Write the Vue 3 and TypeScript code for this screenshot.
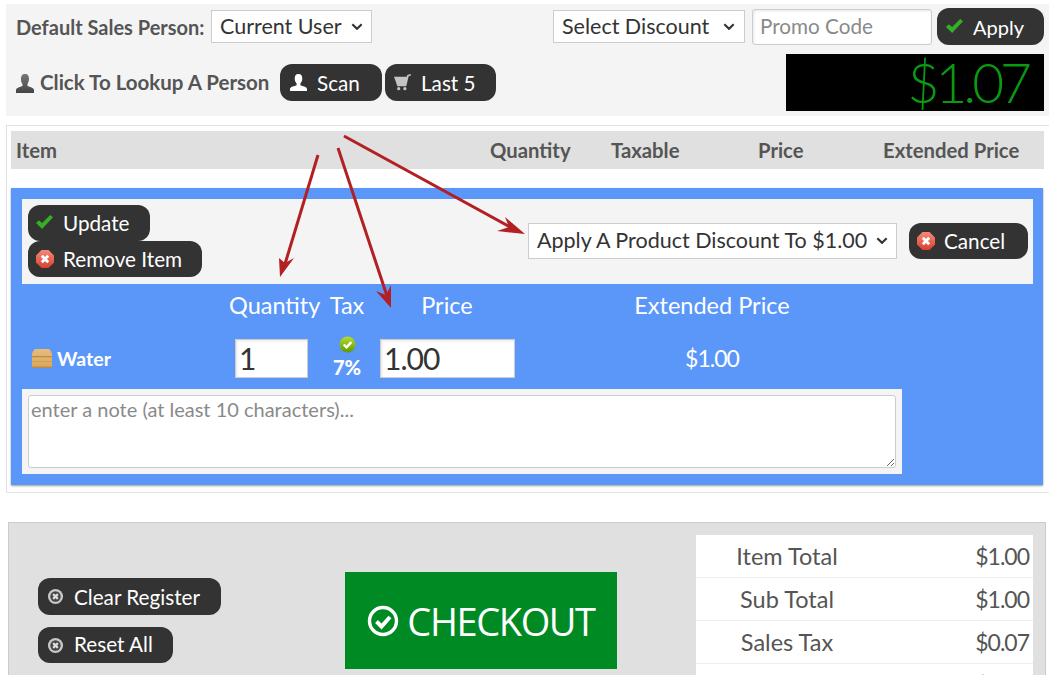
<script setup lang="ts">
const rows = [
  { label: 'Item Total', value: '$1.00' },
  { label: 'Sub Total', value: '$1.00' },
  { label: 'Sales Tax', value: '$0.07' },
  { label: 'Total', value: '$1.07' }
]
</script>

<template>
  <div class="page">
    <svg width="0" height="0" class="defs">
      <defs>
        <linearGradient id="redG" x1="0" y1="0" x2="0" y2="1"><stop offset="0" stop-color="#f58a78" /><stop offset="1" stop-color="#d8402f" /></linearGradient>
        <linearGradient id="greenG" x1="0" y1="0" x2="0" y2="1"><stop offset="0" stop-color="#b5dc2e" /><stop offset="1" stop-color="#5f9a00" /></linearGradient>
        <linearGradient id="boxG" x1="0" y1="0" x2="0" y2="1"><stop offset="0" stop-color="#e8bd78" /><stop offset="1" stop-color="#d9a65c" /></linearGradient>
        <linearGradient id="busG" x1="0" y1="0" x2="0" y2="1"><stop offset="0" stop-color="#777" /><stop offset="1" stop-color="#444" /></linearGradient>
      </defs>
    </svg>
    <section class="topbar">
      <div class="top-left">
        <div class="line first">
          <span class="lbl sales">Default Sales Person:</span>
          <span class="sel person"><span class="sel-text">Current User</span><svg class="chev" viewBox="0 0 10 6"><path d="M1 1l4 4 4-4" /></svg></span>
        </div>
        <div class="line second">
          <svg class="lookup" viewBox="0 0 18 19"><path fill="url(#busG)" d="M9 0c3 0 4 2 4 5 0 2-1 4-1.500 5v2c2 1 6.500 1.500 6.500 4v3H0v-3c0-2.500 4.500-3 6.500-4v-2C5.500 9 5 7 5 5c0-3 1-5 4-5z" /></svg>
          <span class="lbl lookup-text">Click To Lookup A Person</span>
          <button class="btn scan"><svg class="ic16" viewBox="0 0 18 18"><path fill="#fff" d="M9 0c3 0 4 2 4 5 0 2-1 4-2 5v2c2 1 7 1.500 7 4v2H0v-2c0-2.500 5-3 7-4v-2C6 9 5 7 5 5c0-3 1-5 4-5z" /></svg>Scan</button>
          <button class="btn last"><svg class="ic16" viewBox="0 0 18 18"><path fill="#c4c4c4" d="M0 3h13.500l.5-2 3.500-1 .5 1.500-2.500.8L13 13H3.500L1.500 7z" /><circle cx="5" cy="15.500" r="1.700" fill="#c4c4c4" /><circle cx="11.500" cy="15.500" r="1.700" fill="#c4c4c4" /></svg>Last 5</button>
        </div>
      </div>
      <div class="top-right">
        <div class="line promo">
          <span class="sel discount"><span class="sel-text">Select Discount</span><svg class="chev" viewBox="0 0 10 6"><path d="M1 1l4 4 4-4" /></svg></span>
          <input class="promo-input" placeholder="Promo Code" />
          <button class="btn apply"><svg class="ic16" viewBox="0 0 18 16"><path fill="#35b026" d="M0 8.500l3-3 3.500 3L15 0l3 2.500L6.500 15z" /></svg>Apply</button>
        </div>
        <div class="total">$1.07</div>
      </div>
    </section>

    <section class="register">
      <div class="thead">
        <span class="c-item">Item</span>
        <span class="c-qty">Quantity</span>
        <span class="c-tax">Taxable</span>
        <span class="c-price">Price</span>
        <span class="c-ext">Extended Price</span>
      </div>
      <div class="editor">
        <div class="actions">
          <div class="stack">
            <button class="btn update"><svg class="ic16" viewBox="0 0 18 16"><path fill="#35b026" d="M0 8.500l3-3 3.500 3L15 0l3 2.500L6.500 15z" /></svg>Update</button>
            <button class="btn remove"><svg class="ic18" viewBox="0 0 18 18"><path fill="url(#redG)" d="M5.500 0h7L18 5.500v7L12.500 18h-7L0 12.500v-7z" /><path d="M5.800 5.800l6.400 6.400M12.200 5.800l-6.400 6.400" stroke="#fff" stroke-width="2.800" /></svg>Remove Item</button>
          </div>
          <div class="actions-right">
            <span class="sel product"><span class="sel-text">Apply A Product Discount To $1.00</span><svg class="chev" viewBox="0 0 10 6"><path d="M1 1l4 4 4-4" /></svg></span>
            <button class="btn cancel"><svg class="ic18" viewBox="0 0 18 18"><path fill="url(#redG)" d="M5.500 0h7L18 5.500v7L12.500 18h-7L0 12.500v-7z" /><path d="M5.800 5.800l6.400 6.400M12.200 5.800l-6.400 6.400" stroke="#fff" stroke-width="2.800" /></svg>Cancel</button>
          </div>
        </div>
        <div class="labels">
          <span>Quantity</span>
          <span>Tax</span>
          <span>Price</span>
          <span>Extended Price</span>
        </div>
        <div class="values">
          <div class="name">
            <svg class="box" viewBox="0 0 20 19"><path fill="url(#boxG)" d="M4 0h12c2 0 3 2 4 5v12l-1 2H1l-1-2V5c1-3 2-5 4-5z" /><path fill="#bb8a48" d="M0 7h20v1.200H0zM0 17.500h20V19H0z" /><path fill="#d29c55" d="M0 12h20v1H0z" /></svg>
            <b>Water</b>
          </div>
          <input class="qty" value="1" />
          <div class="tax">
            <svg class="tick" viewBox="0 0 18 18"><circle cx="9" cy="9" r="8.500" fill="url(#greenG)" /><path d="M5 9l3 3 5-5.500" fill="none" stroke="#fff" stroke-width="2.600" /></svg>
            <b>7%</b>
          </div>
          <input class="price" value="1.00" />
          <span class="ext">$1.00</span>
        </div>
        <div class="note">
          <textarea placeholder="enter a note (at least 10 characters)..."></textarea>
        </div>
      </div>
    </section>

    <section class="bottom">
      <div class="clear-btns">
        <button class="btn clear"><svg class="ic16" viewBox="0 0 18 18"><circle cx="9" cy="9" r="8" fill="#c8c8c8" /><circle cx="9" cy="9" r="5.500" fill="#444" /><path d="M6.500 6.500l5 5M11.500 6.500l-5 5" stroke="#ddd" stroke-width="2.400" /></svg>Clear Register</button>
        <button class="btn reset"><svg class="ic16" viewBox="0 0 18 18"><circle cx="9" cy="9" r="8" fill="#c8c8c8" /><circle cx="9" cy="9" r="5.500" fill="#444" /><path d="M6.500 6.500l5 5M11.500 6.500l-5 5" stroke="#ddd" stroke-width="2.400" /></svg>Reset All</button>
      </div>
      <button class="checkout"><svg viewBox="0 0 32 32" class="ck"><circle cx="16" cy="16" r="13.500" fill="none" stroke="#fff" stroke-width="3.400" /><path d="M9.500 16.500l5 5 8.500-9.500" fill="none" stroke="#fff" stroke-width="4" /></svg>CHECKOUT</button>
      <div class="sums">
        <div v-for="r in rows" :key="r.label" class="sum">
          <span class="sum-l">{{ r.label }}</span>
          <span class="sum-v">{{ r.value }}</span>
        </div>
      </div>
    </section>

    <svg class="arrows" viewBox="0 0 1049 675" width="1049" height="675">
      <g stroke="#b22024" stroke-width="3" fill="none">
        <path d="M318 155L285 264" />
        <path d="M338 148L387 296" />
        <path d="M344 136L510 227" />
      </g>
      <g fill="#b22024">
        <path d="M280 277L279 258L285 263L294 258Z" />
        <path d="M391 308L376 291L386 295L391 285Z" />
        <path d="M525 234L497 231L509 227L505 217Z" />
      </g>
    </svg>
  </div>
</template>

<style>
html, body { margin: 0; background: #fff; overflow: hidden; }
</style>

<style scoped>
.page {
  position: relative;
  width: 1049px;
  height: 675px;
  overflow: hidden;
  font-family: Lato, "Open Sans", sans-serif;
  color: #555;
  font-size: 20.3px;
  box-sizing: border-box;
  padding-top: 4px;
}
.page * { box-sizing: border-box; }
.defs { position: absolute; }
.topbar {
  display: flex;
  justify-content: space-between;
  margin-left: 6px;
  height: 112px;
  background: #f4f4f4;
  padding-right: 5px;
}
.top-left { padding: 6px 0 0 10px; }
.line { display: flex; align-items: center; }
.first { height: 33px; }
.second { margin-top: 21px; height: 37px; }
.lbl { color: #555; white-space: nowrap; font-weight: 700; }
.sales { width: 195px; font-size: 20px; }
.lookup { width: 18px; height: 19px; margin: 2px 6px 0 0; }
.lookup-text { width: 240px; padding-bottom: 2px; font-size: 20.5px; }
.sel {
  display: inline-flex;
  align-items: center;
  justify-content: space-between;
  height: 33px;
  background: #fff;
  border: 1px solid #ccc;
  color: #333;
  padding: 0 8px;
  font-size: 21.5px;
  white-space: nowrap;
}
.sel-text { padding-bottom: 2px; }
.person { width: 161px; }
.discount { width: 192px; padding-right: 9px; }
.chev { width: 12px; height: 7px; flex: none; fill: none; stroke: #333; stroke-width: 1.800; }
.btn {
  display: inline-flex;
  align-items: center;
  height: 37px;
  background: #333;
  color: #fff;
  border: 0;
  border-radius: 12px;
  font: inherit;
  font-size: 20.7px;
  padding: 0 8px;
  white-space: nowrap;
}
.ic16 { width: 17px; height: 17px; margin-right: 10px; flex: none; }
.ic18 { width: 18px; height: 18px; margin-right: 9px; flex: none; }
.scan { width: 102px; padding-left: 10px; }
.last { width: 111px; margin-left: 3px; padding-left: 9px; }
.top-right { width: 491px; padding-top: 4px; }
.promo { height: 37px; justify-content: flex-end; }
.promo-input {
  width: 180px;
  height: 36px;
  margin: 0 5px 0 7px;
  border: 1px solid #ccc;
  border-radius: 3px;
  padding: 0 7px 2px;
  font: inherit;
  font-size: 20.7px;
  background: #fff;
  box-shadow: inset 1px 1px 3px rgba(0, 0, 0, .1);
}
.promo-input::placeholder { color: #8a8a8a; opacity: 1; }
.btn.apply { width: 107px; padding-left: 9px; font-size: 20px; }
.total {
  margin: 9px 0 0 233px;
  height: 57px;
  background: #000;
  color: #0a9a12;
  font-size: 55px;
  line-height: 57px;
  text-align: right;
  padding-right: 16px;
  font-weight: 300;
  letter-spacing: -4px;
}
.register {
  margin: 9px 0 0 6px;
  height: 368px;
  border: 1px solid #e2e2e2;
  border-right: 0;
  padding: 5px 5px 0 4px;
}
.thead {
  position: relative;
  height: 38px;
  background: #e0e0e0;
  font-weight: 700;
  line-height: 38px;
}
.thead span { position: absolute; top: 0; white-space: nowrap; }
.c-item { left: 5px; }
.c-qty { left: 479px; }
.c-tax { left: 600px; }
.c-price { left: 747px; }
.c-ext { left: 872px; }
.editor {
  margin-top: 19px;
  height: 297px;
  width: 1032px;
  background: #5b97f9;
  padding: 11px 10px 0 11px;
  box-shadow: 0 1px 2px rgba(0, 0, 0, .4);
  color: #fff;
}
.actions {
  display: flex;
  justify-content: space-between;
  align-items: center;
  height: 85px;
  background: #f4f4f4;
  padding: 0 5px 2px 6px;
}
.stack { display: flex; flex-direction: column; align-items: flex-start; }
.stack .btn { height: 36px; padding-left: 8px; }
.update { width: 122px; }
.remove { width: 174px; }
.actions-right { display: flex; align-items: center; gap: 12px; }
.product { width: 369px; height: 36px; }
.cancel { width: 119px; height: 36px; }
.labels {
  display: grid;
  grid-template-columns: 86px 64px 136px 394px;
  padding-left: 207px;
  font-size: 23.5px;
  height: 44px;
  align-items: center;
  text-align: center;
  padding-bottom: 2px;
}
.labels span { white-space: nowrap; }
.values {
  display: grid;
  grid-template-columns: 213px 73px 72px 135px 394px;
  height: 60px;
  align-items: center;
}
.name { display: flex; align-items: center; padding-left: 10px; gap: 5px; font-size: 19.5px; }
.box { width: 20px; height: 19px; }
.qty, .price {
  height: 39px;
  border: 1px solid #ccc;
  background: #fff;
  color: #333;
  font: inherit;
  font-size: 30px;
  letter-spacing: -1px;
  padding: 0 3px;
  width: 100%;
  box-shadow: inset 1px 1px 3px rgba(0, 0, 0, .1);
}
.tax { display: flex; flex-direction: column; align-items: center; padding-left: 6px; font-size: 20px; line-height: 20px; font-weight: 700; }
.tick { width: 17px; height: 17px; margin: -3px 0 4px; }
.ext { text-align: center; font-size: 23px; letter-spacing: -1px; }
.note {
  width: 880px;
  height: 85px;
  margin-top: 1px;
  background: #f4f4f4;
  padding: 6px;
}
textarea {
  display: block;
  width: 100%;
  height: 73px;
  border: 1px solid #ccc;
  border-radius: 3px;
  padding: 1px 2px;
  font: inherit;
  font-size: 20px;
  background: #fff;
}
textarea::placeholder { color: #8a8a8a; opacity: 1; }
.bottom {
  position: relative;
  display: flex;
  margin: 29px 3px 0 8px;
  height: 200px;
  background: #e0e0e0;
  border: 1px solid #ccc;
}
.clear-btns {
  width: 336px;
  padding: 55px 0 0 29px;
  display: flex;
  flex-direction: column;
  align-items: flex-start;
  gap: 12px;
}
.clear { width: 183px; height: 37px; padding-left: 9px; }
.reset { width: 135px; height: 36px; padding-left: 9px; padding-bottom: 2px; }
.reset .ic16 { margin-top: 2px; }
.checkout {
  align-self: flex-start;
  margin-top: 49px;
  width: 272px;
  height: 97px;
  background: #008a23;
  border: 0;
  color: #fff;
  font-family: "Open Sans", sans-serif;
  font-size: 38px;
  letter-spacing: -1.400px;
  display: flex;
  align-items: center;
  justify-content: center;
  gap: 8px;
  padding: 0;
}
.ck { width: 32px; height: 32px; }
.sums {
  margin: 12px 0 0 79px;
  width: 337px;
  background: #fff;
  align-self: flex-start;
}
.sum {
  display: flex;
  height: 43px;
  align-items: center;
  border-bottom: 1px solid #eee;
  font-size: 23.5px;
  font-weight: 400;
  color: #555;
  padding: 0 4px 1px 0;
}
.sum-l { width: 182px; text-align: center; }
.sum-v { flex: 1; text-align: right; font-size: 23px; letter-spacing: -1px; }
.arrows { position: absolute; left: 0; top: 0; pointer-events: none; }
</style>
